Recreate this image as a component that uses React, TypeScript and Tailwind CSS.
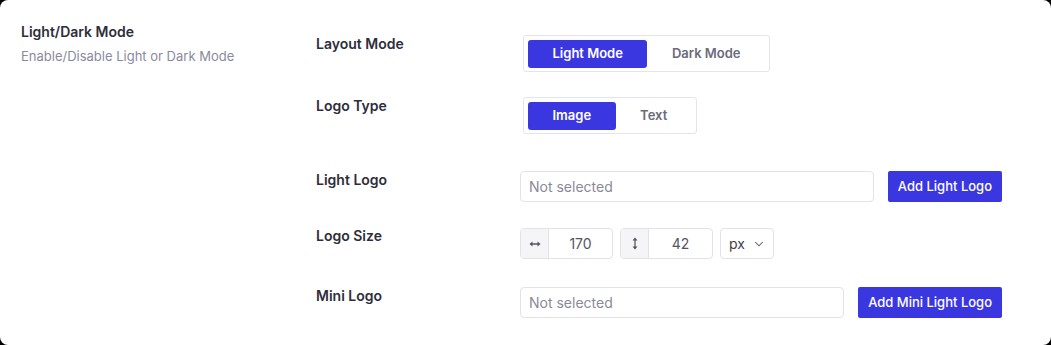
import { ChevronDown } from 'lucide-react';

const BLUE = 'bg-[#3a37e1]';

function HArrow() {
  return (
    <svg width="12" height="8" viewBox="0 0 12 8" className="text-[#555560]">
      <line x1="2.5" y1="4" x2="9.5" y2="4" stroke="currentColor" strokeWidth="1.3" />
      <path d="M0.5 4 L3.5 1.5 L3.5 6.5 Z" fill="currentColor" />
      <path d="M11.5 4 L8.5 1.5 L8.5 6.5 Z" fill="currentColor" />
    </svg>
  );
}

function VArrow() {
  return (
    <svg width="8" height="13" viewBox="0 0 8 13" className="text-[#555560]">
      <line x1="4" y1="2.5" x2="4" y2="10.5" stroke="currentColor" strokeWidth="1.3" />
      <path d="M4 0.5 L1.5 3.5 L6.5 3.5 Z" fill="currentColor" />
      <path d="M4 12.5 L1.5 9.5 L6.5 9.5 Z" fill="currentColor" />
    </svg>
  );
}

function Segmented({ options, active }: { options: string[]; active: number }) {
  return (
    <div className="ml-[3px] flex h-[37px] items-center rounded-[3px] border border-[#e4e4ea] bg-white p-[4px]">
      {options.map((o, i) => (
        <button
          key={o}
          className={
            i === active
              ? `${BLUE} h-[28px] rounded-[3px] px-[24.5px] text-[13px] font-semibold text-white`
              : 'h-[28px] rounded-[3px] px-[24.5px] text-[13px] font-semibold text-[#6b6b7c]'
          }
        >
          {o}
        </button>
      ))}
    </div>
  );
}

function Label({ children, offset }: { children: string; offset: string }) {
  return (
    <div className={`w-[204px] shrink-0 text-[14px] font-semibold leading-5 text-[#2e2e3a] ${offset}`}>
      {children}
    </div>
  );
}

function FilePicker({ button }: { button: string }) {
  return (
    <div className="flex w-[482px] items-center gap-[14px]">
      <div className="flex h-[31px] flex-1 items-center rounded-[4px] border border-[#e2e2e8] px-2 text-[14px] text-[#8a8a97]">
        Not selected
      </div>
      <button className={`${BLUE} h-[31px] rounded-[2px] px-[10px] text-[13px] font-medium text-white`}>
        {button}
      </button>
    </div>
  );
}

function SizeInput({ icon, value }: { icon: React.ReactNode; value: string }) {
  return (
    <div className="flex h-[31px] w-[93px] overflow-hidden rounded-[4px] border border-[#e2e2e8]">
      <div className="flex w-[28px] items-center justify-center border-r border-[#e2e2e8] bg-[#f5f5f7]">
        {icon}
      </div>
      <div className="flex flex-1 items-center justify-center text-[14px] text-[#555560]">{value}</div>
    </div>
  );
}

export default function App() {
  return (
    <div className="h-[345px] w-full bg-black" style={{ fontFamily: 'Inter, "Noto Sans", sans-serif' }}>
      <div className="flex h-full w-full rounded-[8px] bg-white px-[21px] pt-[24px]">
        {/* Left: section info */}
        <div className="w-[295px] shrink-0">
          <div className="text-[14px] font-semibold leading-4 text-[#2e2e3a]">Light/Dark Mode</div>
          <div className="mt-[8px] text-[13px] leading-4 text-[#8a8a9e]">Enable/Disable Light or Dark Mode</div>
        </div>

        {/* Right: settings */}
        <div className="mt-[11px] flex flex-col">
          <div className="flex items-start">
            <Label offset="-mt-px">Layout Mode</Label>
            <Segmented options={['Light Mode', 'Dark Mode']} active={0} />
          </div>

          <div className="mt-[25px] flex items-start">
            <Label offset="-mt-px">Logo Type</Label>
            <Segmented options={['Image', 'Text']} active={0} />
          </div>

          <div className="mt-[37px] flex items-start">
            <Label offset="-mt-px">Light Logo</Label>
            <FilePicker button="Add Light Logo" />
          </div>

          <div className="mt-[26px] flex items-start">
            <Label offset="-mt-[2px]">Logo Size</Label>
            <div className="flex items-center gap-[7px]">
              <SizeInput icon={<HArrow />} value="170" />
              <SizeInput icon={<VArrow />} value="42" />
              <div className="flex h-[31px] w-[54px] items-center justify-between rounded-[4px] border border-[#e2e2e8] pl-[8px] pr-[7px] text-[14px] text-[#3e3e48]">
                px
                <ChevronDown size={14} strokeWidth={1.8} className="text-[#555560]" />
              </div>
            </div>
          </div>

          <div className="mt-[28px] flex items-start">
            <Label offset="-mt-px">Mini Logo</Label>
            <FilePicker button="Add Mini Light Logo" />
          </div>
        </div>
      </div>
    </div>
  );
}
